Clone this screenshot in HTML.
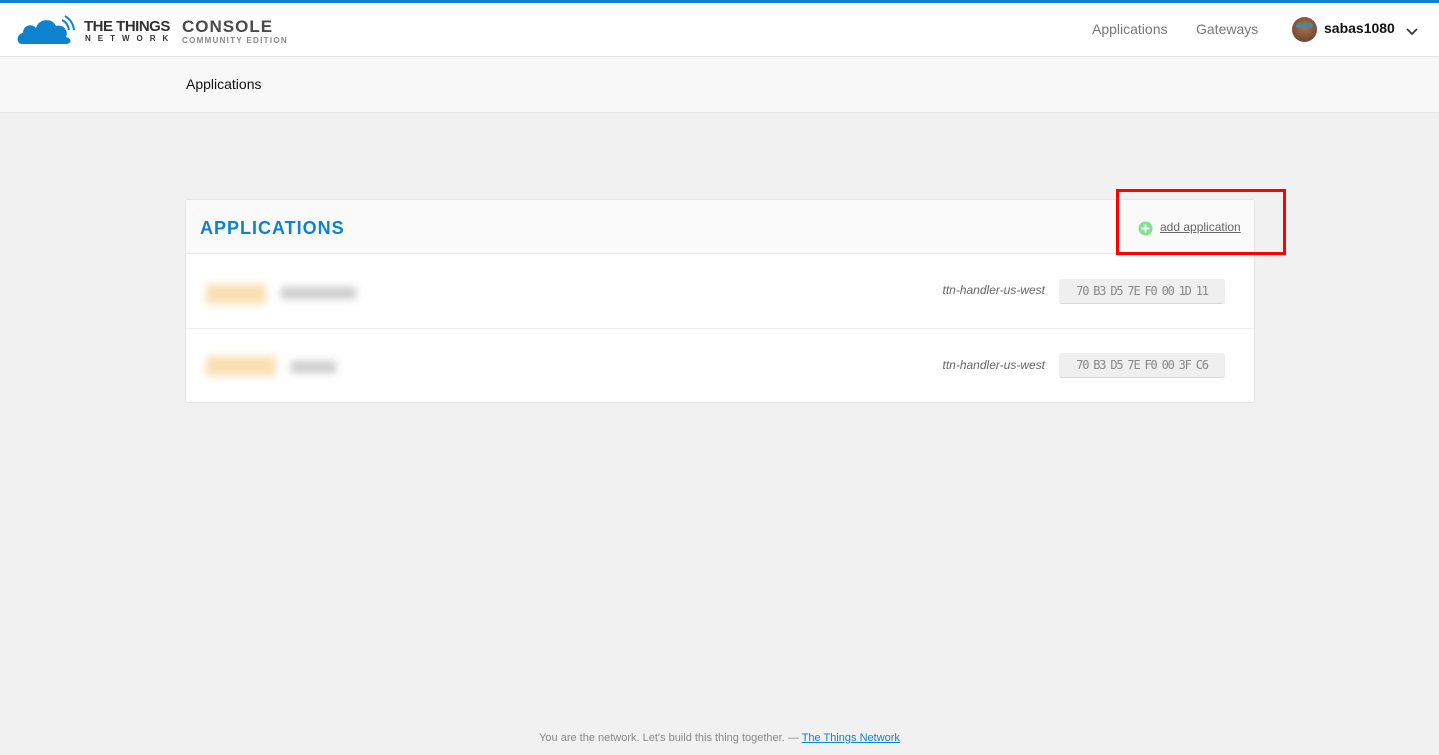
<!DOCTYPE html>
<html><head><style>
*{box-sizing:border-box;margin:0;padding:0}
body{width:1439px;height:755px;background:#f1f1f1;font-family:"Liberation Sans",sans-serif;position:relative;overflow:hidden}
.top{position:absolute;left:0;top:0;width:1439px;height:3px;background:#0d83d0}
.nav{position:absolute;left:0;top:3px;width:1439px;height:54px;background:#fff;border-bottom:1px solid #e4e4e4}
.bc{position:absolute;left:0;top:57px;width:1439px;height:56px;background:#f8f8f8;border-bottom:1px solid #e4e4e4}
.abs{position:absolute}
.card{position:absolute;left:185px;top:199px;width:1070px;height:204px;background:#fff;border:1px solid #e6e6e6;border-radius:3px}
.head{height:54px;background:#fafafa;border-bottom:1px solid #e6e6e6}
.row{height:75px;border-bottom:1px solid #ececec;position:relative}
.eui{position:absolute;left:873px;width:166px;height:25px;background:#efefef;border-radius:3px;border-bottom:1px solid #d8d8d8;color:#888;font-family:"DejaVu Sans Mono",monospace;font-size:12px;line-height:25px;text-align:center;letter-spacing:-1.2px;white-space:nowrap;word-spacing:-1px}
.hd{position:absolute;right:209px;color:#666;font-style:italic;font-size:12px}
.blur{position:absolute;filter:blur(4px)}
</style></head><body>
<div class="top"></div>
<div class="nav">
<svg class="abs" style="left:16px;top:11px" width="60" height="32" viewBox="0 0 60 32"><path d="M6 30 C0 30 0 20 7 19 C7 11 16 9 20 14 C22 5 36 3 40 12 C48 10 53 18 50 23 C56 24 56 30 50 30 Z" fill="#0d83d0"/><path d="M46 6 Q52 9 53 16 M49 2 Q57 7 58 16" stroke="#0d83d0" stroke-width="2" fill="none"/></svg>
<div class="abs" style="left:84px;top:15px;font-weight:bold;font-size:15px;color:#333;letter-spacing:-0.5px">THE THINGS</div>
<div class="abs" style="left:85px;top:31px;font-size:8px;font-weight:bold;color:#333;letter-spacing:7px">NETWORK</div>
<div class="abs" style="left:182px;top:14px;font-weight:bold;font-size:17px;color:#4a4a4a;letter-spacing:1px">CONSOLE</div>
<div class="abs" style="left:182px;top:33px;font-size:8px;font-weight:bold;color:#888;letter-spacing:1.3px">COMMUNITY EDITION</div>
<div class="abs" style="left:1092px;top:18px;font-size:14px;color:#777">Applications</div>
<div class="abs" style="left:1196px;top:18px;font-size:14px;color:#777">Gateways</div>
<div class="abs" style="left:1292px;top:14px;width:25px;height:25px;border-radius:50%;background:radial-gradient(circle at 50% 40%,#b07050,#5a3a2a)"></div>
<div class="abs" style="left:1296px;top:20px;width:17px;height:5px;background:#3a8fa0;border-radius:3px"></div>
<div class="abs" style="left:1324px;top:17px;font-size:14px;font-weight:bold;color:#111">sabas1080</div>
<svg class="abs" style="left:1406px;top:25px" width="12" height="8"><path d="M1 1 L6 6 L11 1" stroke="#333" stroke-width="1.6" fill="none"/></svg>
</div>
<div class="bc"><div class="abs" style="left:186px;top:19px;font-size:14px;color:#111">Applications</div></div>
<div class="card">
<div class="head"><div class="abs" style="left:14px;top:18px;font-size:18px;font-weight:bold;color:#0d83d0;letter-spacing:1px">APPLICATIONS</div>
<svg class="abs" style="left:952px;top:21px" width="15" height="15"><circle cx="7.5" cy="7.5" r="7" fill="#84e08e"/><path d="M7.5 3.5v8M3.5 7.5h8" stroke="#fff" stroke-width="1.8"/></svg>
<div class="abs" style="left:974px;top:20px;font-size:12px;color:#666;text-decoration:underline">add application</div></div>
<div class="row"><div class="blur" style="left:20px;top:30px;width:60px;height:20px;background:#fbe0b5"></div><div class="blur" style="left:95px;top:33px;width:75px;height:12px;background:#ccc"></div>
<div class="hd" style="top:29px">ttn-handler-us-west</div><div class="eui" style="top:25px">70 B3 D5 7E F0 00 1D 11</div></div>
<div class="row" style="border:none"><div class="blur" style="left:20px;top:27px;width:70px;height:20px;background:#fbe0b5"></div><div class="blur" style="left:105px;top:32px;width:45px;height:12px;background:#ccc"></div>
<div class="hd" style="top:29px">ttn-handler-us-west</div><div class="eui" style="top:24px">70 B3 D5 7E F0 00 3F C6</div></div>
</div>
<div class="abs" style="left:1116px;top:189px;width:170px;height:66px;border:3px solid #f00"></div>
<div class="abs" style="left:0;width:1439px;top:732px;text-align:center;font-size:11px;color:#888">You are the network. Let's build this thing together. — <span style="color:#0d83d0;text-decoration:underline">The Things Network</span></div>
</body></html>
